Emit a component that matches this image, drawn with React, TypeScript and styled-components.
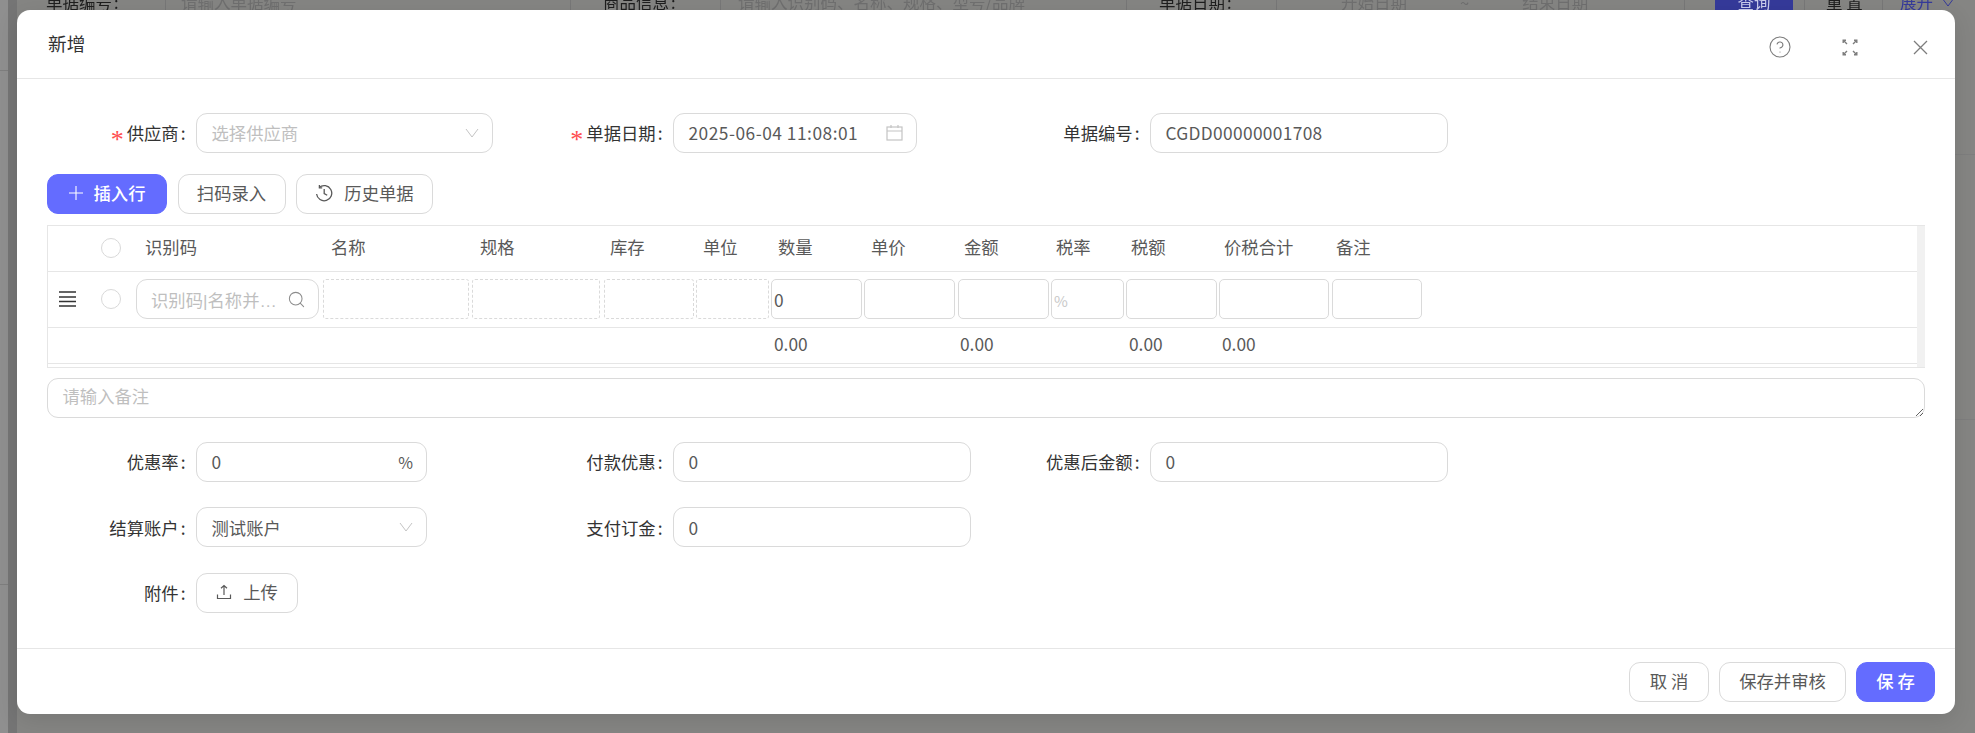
import React from "react";
import styled, { createGlobalStyle } from "styled-components";
import { CircleHelp, Search } from "lucide-react";

const Global = createGlobalStyle`
  html, body { margin: 0; padding: 0; background: #868686; }
  * { box-sizing: border-box; }
`;

const FONT = `"Noto Sans CJK SC", "Noto Sans", sans-serif`;
const BLUE = "#646cff";
const LINE = "#e6e6e6";
const EDGE = "#dadada";

const Page = styled.div`
  position: relative;
  width: 1975px;
  height: 733px;
  overflow: hidden;
  font-family: ${FONT};
  font-size: 17.33px;
  background:
    linear-gradient(#7e7e7e, #7e7e7e) right 0 top 154px / 20px 1px no-repeat,
    linear-gradient(#7e7e7e, #7e7e7e) right 0 top 419px / 20px 1px no-repeat,
    linear-gradient(#7e7e7e, #7e7e7e) left 0 top 70px / 8px 1px no-repeat,
    linear-gradient(#7e7e7e, #7e7e7e) left 0 top 584px / 8px 1px no-repeat,
    linear-gradient(to right, #8f8f8f 8px, #757575 8px, #757575 17px, #858583 17px);
`;

/* ---------- page dimmed behind the dialog ---------- */
const BehindRow = styled.div`
  display: grid;
  grid-template-columns: 46px 119px 405px 150px 406px 150px 408px 120px 78px 1fr;
  height: 22px;
  margin-top: -9px;
  font-size: 16.5px;
  line-height: 22px;
  color: #1e1e1e;
  white-space: nowrap;
  filter: blur(0.4px);
`;
const BehindCell = styled.div<{ $pad?: number; $rule?: boolean; $tone?: string }>`
  padding-left: ${(p) => p.$pad ?? 0}px;
  border-left: ${(p) => (p.$rule ? "1px solid #777" : "none")};
  color: ${(p) => p.$tone ?? "inherit"};
  display: flex;
  align-items: center;
`;
const BehindRange = styled.div`
  display: flex;
  gap: 53px;
  color: #6f6f6f;
`;
const BehindPrimary = styled.div`
  width: 78px;
  margin-left: 30px;
  height: 22px;
  background: #353a9a;
  color: #c9ccec;
  text-align: center;
`;
const BehindCaret = styled.span`
  display: inline-flex;
  margin-left: 8px;
`;

/* ---------- dialog shell ---------- */
const Dialog = styled.div`
  position: absolute;
  left: 17px;
  top: 10px;
  width: 1938px;
  height: 704px;
  display: flex;
  flex-direction: column;
  background: #fff;
  border-radius: 13px;
  color: #333;
  box-shadow: 0 6px 22px rgba(0, 0, 0, 0.1);
`;
const Header = styled.header`
  flex: 0 0 69px;
  display: flex;
  align-items: center;
  padding: 0 0 0 31px;
  border-bottom: 1px solid ${LINE};
`;
const Title = styled.h2`
  flex: 1;
  margin: 0 0 4px;
  font-size: 18.67px;
  font-weight: 400;
  color: #333;
`;
const HeaderActions = styled.div`
  display: flex;
  align-items: center;
  padding-top: 6px;
  color: #7d7d7d;
`;
const HeaderAction = styled.span`
  width: 70px;
  display: flex;
  justify-content: center;
`;
const Body = styled.main`
  flex: 1;
  padding: 33.5px 30px 0;
`;
const Footer = styled.footer`
  flex: 0 0 66px;
  display: flex;
  justify-content: flex-end;
  gap: 10px;
  padding: 12.5px 20px 0 0;
  border-top: 1px solid ${LINE};
`;

/* ---------- form ---------- */
const FormRow = styled.div<{ $gap?: number }>`
  display: grid;
  grid-template-columns: repeat(3, 477px);
  margin-bottom: ${(p) => p.$gap ?? 0}px;
`;
const Field = styled.div`
  display: flex;
  align-items: center;
`;
const Label = styled.label`
  flex: 0 0 149px;
  padding-right: 10.5px;
  text-align: right;
  white-space: nowrap;
  color: #333;
`;
const Colon = styled.span`
  margin-left: 2px;
`;
const Star = styled.span`
  font-family: "Liberation Serif", serif;
  font-size: 26px;
  line-height: 0;
  vertical-align: -8px;
  color: #ff4d4f;
  margin-right: 3px;
`;
const Box = styled.div<{ $w: number }>`
  width: ${(p) => p.$w}px;
  height: 40px;
  display: flex;
  align-items: center;
  justify-content: space-between;
  padding: 0 13px 0 14.5px;
  border: 1px solid ${EDGE};
  border-radius: 11px;
  color: #595959;
  background: #fff;
  white-space: nowrap;
`;
const Tracked = styled.span<{ $s: number }>`
  letter-spacing: ${(p) => p.$s}px;
`;
const Hint = styled.span`
  color: #bfbfbf;
`;
const Suffix = styled.span`
  font-size: 16px;
`;
const Pale = styled.span`
  display: inline-flex;
  color: #c4c4c4;
`;

/* ---------- buttons ---------- */
const Toolbar = styled.div`
  display: flex;
  gap: 10.5px;
  margin: 21px 0 11px;
`;
const Button = styled.button<{ $primary?: boolean; $w: number }>`
  height: 40px;
  width: ${(p) => p.$w}px;
  padding: 0 0 2px;
  display: inline-flex;
  align-items: center;
  justify-content: center;
  gap: 11px;
  border-radius: 11px;
  border: 1px solid ${(p) => (p.$primary ? BLUE : EDGE)};
  background: ${(p) => (p.$primary ? BLUE : "#fff")};
  color: ${(p) => (p.$primary ? "#fff" : "#595959")};
  font: ${(p) => (p.$primary ? 500 : 400)} 17.33px ${FONT};
  white-space: nowrap;
`;

/* ---------- table ---------- */
const Table = styled.section`
  height: 143px;
  display: flex;
  border: 1px solid ${LINE};
  border-right: none;
`;
const TableMain = styled.div`
  flex: 1;
  min-width: 0;
`;
const Rail = styled.div`
  flex: 0 0 8px;
  background: #f1f1f1;
`;
const HeadRow = styled.div`
  height: 46px;
  display: flex;
  align-items: center;
  border-bottom: 1px solid ${LINE};
  color: #595959;
`;
const HeadCell = styled.div<{ $w: number }>`
  flex: 0 0 ${(p) => p.$w}px;
  white-space: nowrap;
  margin-bottom: 3px;
`;
const EditRow = styled.div`
  height: 56px;
  display: flex;
  align-items: center;
  border-bottom: 1px solid ${LINE};
`;
const DragCell = styled.div`
  flex: 0 0 53px;
  display: flex;
  padding-left: 11px;
`;
const Radio = styled.span`
  flex: 0 0 20px;
  width: 20px;
  height: 20px;
  border: 1px solid #d9d9d9;
  border-radius: 50%;
  background: #fff;
`;
const RadioSlot = styled.div`
  flex: 0 0 35px;
  display: flex;
`;
const HeadLead = styled.div`
  flex: 0 0 53px;
`;
const CodeBox = styled.div`
  flex: 0 0 187px;
  display: flex;
`;
const CodeInput = styled.div`
  width: 183px;
  height: 40px;
  display: flex;
  align-items: center;
  justify-content: space-between;
  padding: 0 12px 0 14px;
  border: 1px solid ${EDGE};
  border-radius: 11px;
  color: #bfbfbf;
`;
const CodeText = styled.span`
  width: 128px;
  overflow: hidden;
  text-overflow: ellipsis;
  white-space: nowrap;
  font-family: "Liberation Sans", "Noto Sans CJK SC", sans-serif;
`;
const Slot = styled.div<{ $w: number }>`
  flex: 0 0 ${(p) => p.$w}px;
`;
const Cell = styled.div<{ $w: number; $dashed?: boolean }>`
  width: ${(p) => p.$w}px;
  height: 40px;
  display: flex;
  align-items: center;
  padding-left: 2px;
  border: 1px ${(p) => (p.$dashed ? "dashed" : "solid")} ${EDGE};
  border-radius: ${(p) => (p.$dashed ? 3 : 5)}px;
  color: #595959;
`;
const RateHint = styled.span`
  color: #c9c9c9;
  font-size: 15px;
  margin-top: 2px;
`;
const SumRow = styled.div`
  height: 36px;
  display: flex;
  align-items: center;
  border-bottom: 1px solid ${LINE};
  color: #595959;
`;
const SumCell = styled.div<{ $w: number }>`
  flex: 0 0 ${(p) => p.$w}px;
  margin-bottom: 3px;
`;

const Remark = styled.textarea`
  display: block;
  width: 100%;
  height: 40px;
  margin: 10px 0 24px;
  padding: 4px 14.5px;
  border: 1px solid ${EDGE};
  border-radius: 11px;
  outline: none;
  resize: vertical;
  font: 400 17.33px/26px ${FONT};
  &::placeholder {
    color: #bfbfbf;
    opacity: 1;
  }
`;

/* ---------- drawings ---------- */
const Chevron = () => (
  <svg width="14" height="10" viewBox="0 0 14 10" fill="none" stroke="currentColor" strokeWidth="1">
    <path d="M1 1l6 8 6-8" />
  </svg>
);
const CalendarGlyph = () => (
  <svg width="17" height="17" viewBox="0 0 17 17" fill="none" stroke="currentColor" strokeWidth="1.2">
    <rect x="1" y="3" width="15" height="13" />
    <path d="M1 7h15M5 1v3M12 1v3" />
  </svg>
);
const PlusGlyph = () => (
  <svg width="14" height="14" viewBox="0 0 14 14" stroke="currentColor" strokeWidth="1.1">
    <path d="M7 0v14M0 7h14" />
  </svg>
);
const HistoryGlyph = () => (
  <svg width="18" height="18" viewBox="0 0 18 18" fill="none" stroke="currentColor" strokeWidth="1.3">
    <path d="M4.2 3.4A7.6 7.6 0 1 1 1.6 10" />
    <path d="M4.4 1v2.8h2.8M9.2 5v4.6l3 1.6" />
  </svg>
);
const UploadGlyph = () => (
  <svg width="16" height="16" viewBox="0 0 16 16" fill="none" stroke="currentColor" strokeWidth="1.2">
    <path d="M8 11V1.500M5 4.300l3-2.800 3 2.800M1.500 10.500v4h13v-4" />
  </svg>
);
const ExpandGlyph = () => (
  <svg width="16" height="17" viewBox="0 0 16 17" fill="none" stroke="currentColor" strokeWidth="1.4">
    <path d="M1 1l4 4M1.200 4V1.200H4M15 1l-4 4M14.800 4V1.200H12M1 16l4-4M1.200 13v2.800H4M15 16l-4-4M14.800 13v2.800H12" />
  </svg>
);
const CloseGlyph = () => (
  <svg width="15" height="15" viewBox="0 0 15 15" stroke="currentColor" strokeWidth="1.3">
    <path d="M1 1l13 13M14 1L1 14" />
  </svg>
);
const DragGlyph = () => (
  <svg width="17" height="16" viewBox="0 0 17 16" stroke="#333" strokeWidth="1.3">
    <path d="M0 1h17M0 6h17M0 10.500h17M0 15h17" />
  </svg>
);

/* ---------- data ---------- */
const heads = [
  ["识别码", 186], ["名称", 149], ["规格", 130], ["库存", 93], ["单位", 75], ["数量", 93],
  ["单价", 93], ["金额", 92], ["税率", 75], ["税额", 93], ["价税合计", 112], ["备注", 80],
] as const;

const cells = [
  { slot: 149, w: 146, dashed: true },
  { slot: 132, w: 128, dashed: true },
  { slot: 92, w: 90, dashed: true },
  { slot: 75, w: 73, dashed: true },
  { slot: 93, w: 91, text: "0" },
  { slot: 94, w: 91 },
  { slot: 93, w: 91 },
  { slot: 75, w: 73, rate: true },
  { slot: 93, w: 91 },
  { slot: 113, w: 110 },
  { slot: 92, w: 90 },
];

const sums = [
  ["", 726], ["0.00", 186], ["0.00", 169], ["0.00", 93], ["0.00", 80],
] as const;

const Labeled = ({ text, required }: { text: string; required?: boolean }) => (
  <Label>
    {required && <Star>*</Star>}
    {text}
    <Colon>:</Colon>
  </Label>
);

export default function App() {
  return (
    <Page>
      <Global />
      <BehindRow>
        <div />
        <BehindCell>单据编号<Colon>:</Colon></BehindCell>
        <BehindCell $rule $pad={15} $tone="#6f6f6f">请输入单据编号</BehindCell>
        <BehindCell $rule $pad={32}>商品信息<Colon>:</Colon></BehindCell>
        <BehindCell $rule $pad={17} $tone="#6f6f6f">请输入识别码、名称、规格、型号/品牌</BehindCell>
        <BehindCell $rule $pad={32}>单据日期<Colon>:</Colon></BehindCell>
        <BehindCell $rule $pad={64}>
          <BehindRange>
            <span>开始日期</span>
            <span>~</span>
            <span>结束日期</span>
          </BehindRange>
        </BehindCell>
        <BehindCell $rule><BehindPrimary>查询</BehindPrimary></BehindCell>
        <BehindCell $rule $pad={21}>重 置</BehindCell>
        <BehindCell $rule $pad={17} $tone="#353a9a">展开<BehindCaret><Chevron /></BehindCaret></BehindCell>
      </BehindRow>

      <Dialog>
        <Header>
          <Title>新增</Title>
          <HeaderActions>
            <HeaderAction><CircleHelp size={24} strokeWidth={1.1} /></HeaderAction>
            <HeaderAction><ExpandGlyph /></HeaderAction>
            <HeaderAction><CloseGlyph /></HeaderAction>
          </HeaderActions>
        </Header>

        <Body>
          <FormRow>
            <Field>
              <Labeled text="供应商" required />
              <Box $w={297}>
                <Hint>选择供应商</Hint>
                <Pale><Chevron /></Pale>
              </Box>
            </Field>
            <Field>
              <Labeled text="单据日期" required />
              <Box $w={244}>
                <Tracked $s={0.5}>2025-06-04 11:08:01</Tracked>
                <Pale><CalendarGlyph /></Pale>
              </Box>
            </Field>
            <Field>
              <Labeled text="单据编号" />
              <Box $w={298}><Tracked $s={0.33}>CGDD00000001708</Tracked></Box>
            </Field>
          </FormRow>

          <Toolbar>
            <Button $primary $w={120}><PlusGlyph />插入行</Button>
            <Button $w={108}>扫码录入</Button>
            <Button $w={137}><HistoryGlyph />历史单据</Button>
          </Toolbar>

          <Table>
            <TableMain>
              <HeadRow>
                <HeadLead />
                <RadioSlot><Radio /></RadioSlot>
                <Slot $w={9} />
                {heads.map(([t, w]) => (
                  <HeadCell key={t} $w={w}>{t}</HeadCell>
                ))}
              </HeadRow>
              <EditRow>
                <DragCell><DragGlyph /></DragCell>
                <RadioSlot><Radio /></RadioSlot>
                <CodeBox>
                  <CodeInput>
                    <CodeText>识别码|名称并回车搜索</CodeText>
                    <Search size={19} strokeWidth={1.3} color="#8c8c8c" />
                  </CodeInput>
                </CodeBox>
                {cells.map((c, i) => (
                  <Slot key={i} $w={c.slot}>
                    <Cell $w={c.w} $dashed={c.dashed}>
                      {c.text}
                      {c.rate && <RateHint>%</RateHint>}
                    </Cell>
                  </Slot>
                ))}
              </EditRow>
              <SumRow>
                {sums.map(([t, w], i) => (
                  <SumCell key={i} $w={w}>{t}</SumCell>
                ))}
              </SumRow>
            </TableMain>
            <Rail />
          </Table>

          <Remark placeholder="请输入备注" readOnly />

          <FormRow $gap={25.5}>
            <Field>
              <Labeled text="优惠率" />
              <Box $w={231}>0<Suffix>%</Suffix></Box>
            </Field>
            <Field>
              <Labeled text="付款优惠" />
              <Box $w={298}>0</Box>
            </Field>
            <Field>
              <Labeled text="优惠后金额" />
              <Box $w={298}>0</Box>
            </Field>
          </FormRow>
          <FormRow $gap={25.5}>
            <Field>
              <Labeled text="结算账户" />
              <Box $w={231}>
                测试账户
                <Pale><Chevron /></Pale>
              </Box>
            </Field>
            <Field>
              <Labeled text="支付订金" />
              <Box $w={298}>0</Box>
            </Field>
          </FormRow>
          <FormRow>
            <Field>
              <Labeled text="附件" />
              <Button $w={102}><UploadGlyph />上传</Button>
            </Field>
          </FormRow>
        </Body>

        <Footer>
          <Button $w={80}>取 消</Button>
          <Button $w={127}>保存并审核</Button>
          <Button $w={79} $primary>保 存</Button>
        </Footer>
      </Dialog>
    </Page>
  );
}
